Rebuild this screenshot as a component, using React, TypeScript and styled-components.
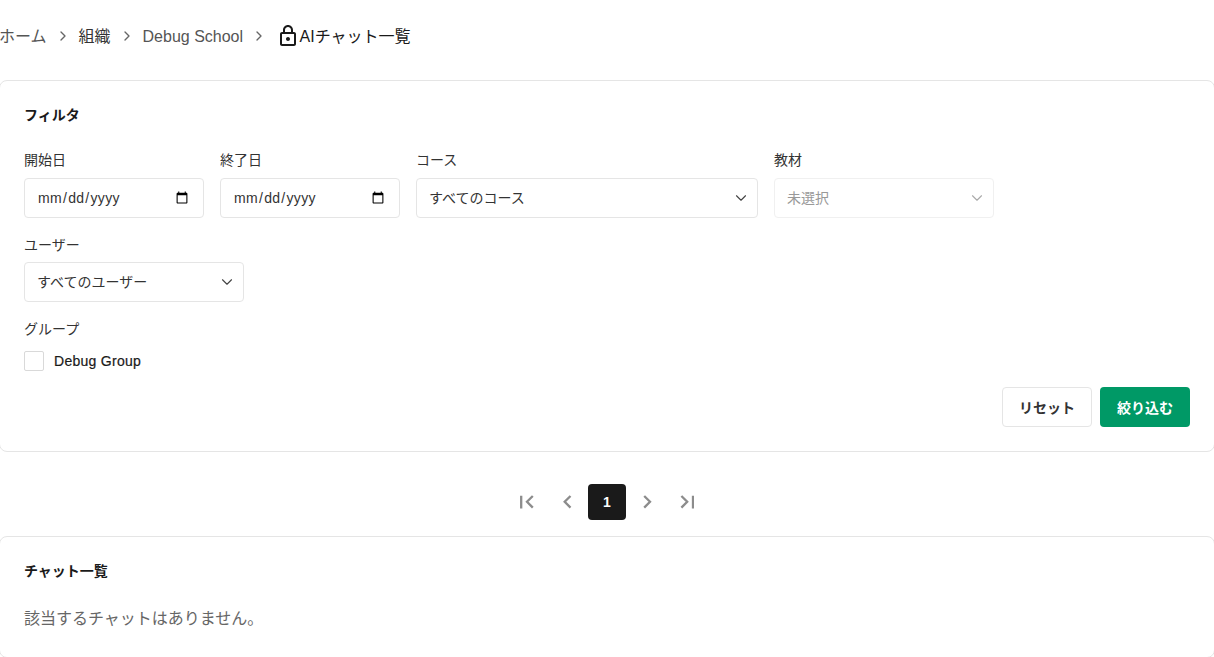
import React from "react";
import styled, { createGlobalStyle } from "styled-components";
import { ChevronDown, ChevronRight } from "lucide-react";

const GlobalStyle = createGlobalStyle`
  * {
    box-sizing: border-box;
  }
  body {
    margin: 0;
    background: #fff;
    color: #1a1a1a;
    font-family: "Liberation Sans", "Noto Sans CJK JP", sans-serif;
  }
`;

const LockIcon = () => (
  <svg width="24" height="24" viewBox="0 0 24 24" fill="#1a1a1a">
    <path d="M18 8h-1V6c0-2.76-2.24-5-5-5S7 3.24 7 6v2H6c-1.1 0-2 .9-2 2v10c0 1.1.9 2 2 2h12c1.1 0 2-.9 2-2V10c0-1.1-.9-2-2-2zM9 6c0-1.66 1.34-3 3-3s3 1.34 3 3v2H9V6zm9 14H6V10h12v10zm-6-3c1.1 0 2-.9 2-2s-.9-2-2-2-2 .9-2 2 .9 2 2 2z" />
  </svg>
);

// pagination arrows, drawn because the bar sits further from the chevron than in the icon packs
const PageIcon = ({ d }: { d: string }) => (
  <svg width="14" height="14" viewBox="0 0 14 14" fill="none" stroke="currentColor" strokeWidth="2.3">
    <path d={d} />
  </svg>
);

const FieldSelect = ({ value, disabled }: { value: string; disabled?: boolean }) => (
  <SelectWrap>
    <StyledSelect disabled={disabled} defaultValue={value}>
      <option>{value}</option>
    </StyledSelect>
    <SelectArrow $disabled={disabled}>
      <ChevronDown size={18} strokeWidth={1.5} />
    </SelectArrow>
  </SelectWrap>
);

export default function App() {
  return (
    <Page>
      <GlobalStyle />
      <Breadcrumb>
        <Crumb>ホーム</Crumb>
        <CrumbSep><ChevronRight size={16} strokeWidth={2} /></CrumbSep>
        <Crumb $dark>組織</Crumb>
        <CrumbSep><ChevronRight size={16} strokeWidth={2} /></CrumbSep>
        <Crumb $latin>Debug School</Crumb>
        <CrumbSep><ChevronRight size={16} strokeWidth={2} /></CrumbSep>
        <Current>
          <LockIcon />
          <CurrentText>AIチャット一覧</CurrentText>
        </Current>
      </Breadcrumb>

      <Card>
        <CardTitle>フィルタ</CardTitle>
        <FilterRow>
          <Field $width={180}>
            <Label>開始日</Label>
            <DateInput type="date" />
          </Field>
          <Field $width={180}>
            <Label>終了日</Label>
            <DateInput type="date" />
          </Field>
          <Field $width={342}>
            <Label>コース</Label>
            <FieldSelect value="すべてのコース" />
          </Field>
          <Field $width={220}>
            <Label>教材</Label>
            <FieldSelect value="未選択" disabled />
          </Field>
        </FilterRow>
        <FilterRow>
          <Field $width={220}>
            <Label $lower>ユーザー</Label>
            <FieldSelect value="すべてのユーザー" />
          </Field>
        </FilterRow>
        <GroupBlock>
          <Label $lower>グループ</Label>
          <CheckRow>
            <CheckBox type="checkbox" />
            Debug Group
          </CheckRow>
        </GroupBlock>
        <Actions>
          <ResetButton>リセット</ResetButton>
          <SubmitButton>絞り込む</SubmitButton>
        </Actions>
      </Card>

      <Pagination>
        <PageButton><PageIcon d="M1.2 .8v12.6M12.8 1 7 6.8l5.8 5.8" /></PageButton>
        <PageButton><PageIcon d="M10.5 1 4.7 6.8l5.8 5.8" /></PageButton>
        <PageButton $active>1</PageButton>
        <PageButton><PageIcon d="M4.2 1 10 6.8l-5.8 5.8" /></PageButton>
        <PageButton><PageIcon d="M13 .8v12.6M1.4 1l5.8 5.8-5.8 5.8" /></PageButton>
      </Pagination>

      <ListCard>
        <CardTitle>チャット一覧</CardTitle>
        <EmptyText>該当するチャットはありません。</EmptyText>
      </ListCard>
    </Page>
  );
}

const Page = styled.div`
  width: 1214px;
  height: 657px;
  overflow: hidden;
`;

const Breadcrumb = styled.nav`
  display: flex;
  align-items: center;
  height: 80px;
  padding-bottom: 8px;
  margin-left: -1px;
  font-size: 16px;
  white-space: nowrap;
`;

// the CJK glyphs sit lower than the Latin ones in this font stack
const Crumb = styled.span<{ $dark?: boolean; $latin?: boolean }>`
  margin: ${(props) => (props.$latin ? "2px 0 0" : "0 0 2px")};
  color: ${(props) => (props.$dark ? "#333" : "#555")};
`;

const CrumbSep = styled.span`
  display: flex;
  margin: 0 8px;
  color: #666;
`;

const Current = styled.span`
  display: flex;
  align-items: center;
  margin-left: 0.5px;
  color: #1a1a1a;
`;

const CurrentText = styled.span`
  margin-bottom: 2px;
`;

const Card = styled.section`
  display: flex;
  flex-direction: column;
  width: 1216px;
  margin-left: -1px;
  border: 1px solid #e5e5e5;
  border-radius: 8px;
  padding: 24px;
`;

const ListCard = styled(Card)`
  height: 122px;
`;

const CardTitle = styled.h2`
  margin: 0;
  font-size: 14px;
  line-height: 20px;
  font-weight: 700;
  color: #1a1a1a;
`;

const FilterRow = styled.div`
  display: flex;
  gap: 16px;
  margin-top: 16px;

  ${CardTitle} + & {
    margin-top: 25px;
  }
`;

const Field = styled.div<{ $width: number }>`
  display: flex;
  flex-direction: column;
  width: ${(props) => props.$width}px;
`;

const Label = styled.label<{ $lower?: boolean }>`
  font-size: 14px;
  line-height: 20px;
  margin-top: ${(props) => (props.$lower ? "1px" : "0")};
  margin-bottom: ${(props) => (props.$lower ? "7px" : "8px")};
  color: #333;
`;

const DateInput = styled.input`
  width: 100%;
  height: 40px;
  padding: 0 12px;
  border: 1px solid #e5e5e5;
  border-radius: 4px;
  background: #fff;
  font-family: inherit;
  font-size: 14px;
  letter-spacing: 0.3px;
  color: #333;
`;

const SelectWrap = styled.div`
  position: relative;
  height: 40px;
`;

const StyledSelect = styled.select`
  width: 100%;
  height: 100%;
  padding: 0 32px 0 12px;
  appearance: none;
  border: 1px solid #e5e5e5;
  border-radius: 4px;
  background: #fff;
  font-family: inherit;
  font-size: 14px;
  color: #333;

  &:disabled {
    border-color: #f0f0f0;
    color: #999;
    opacity: 1;
  }
`;

const SelectArrow = styled.span<{ $disabled?: boolean }>`
  position: absolute;
  top: 11px;
  right: 8px;
  display: flex;
  pointer-events: none;
  color: ${(props) => (props.$disabled ? "#aaa" : "#444")};
`;

const GroupBlock = styled.div`
  display: flex;
  flex-direction: column;
  margin-top: 16px;
`;

const CheckRow = styled.div`
  display: flex;
  align-items: center;
  gap: 10px;
  margin-top: 5px;
  font-size: 14px;
  letter-spacing: 0.28px;
  -webkit-text-stroke: 0.2px #1a1a1a;
  color: #1a1a1a;
`;

const CheckBox = styled.input`
  appearance: none;
  width: 20px;
  height: 20px;
  margin: 0;
  border: 1px solid #d9d9d9;
  border-radius: 2px;
  background: #fff;
`;

const Actions = styled.div`
  display: flex;
  justify-content: flex-end;
  gap: 8px;
  margin-top: 16px;
`;

const ResetButton = styled.button`
  width: 90px;
  height: 40px;
  border: 1px solid #e5e5e5;
  border-radius: 4px;
  background: #fff;
  font-family: inherit;
  font-size: 14px;
  font-weight: 700;
  color: #333;
`;

const SubmitButton = styled(ResetButton)`
  border: none;
  background: #009966;
  color: #fff;
`;

const Pagination = styled.nav`
  display: flex;
  justify-content: center;
  gap: 2px;
  margin: 32px 0 16px;
`;

const PageButton = styled.button<{ $active?: boolean }>`
  display: flex;
  align-items: center;
  justify-content: center;
  width: 38px;
  height: 36px;
  padding: 0;
  border: none;
  border-radius: 4px;
  background: ${(props) => (props.$active ? "#1a1a1a" : "transparent")};
  color: ${(props) => (props.$active ? "#fff" : "#8c8c8c")};
  font-family: inherit;
  font-size: 14px;
  font-weight: 700;
`;

const EmptyText = styled.p`
  margin: 26px 0 0;
  font-size: 16px;
  line-height: 24px;
  color: #666;
`;
